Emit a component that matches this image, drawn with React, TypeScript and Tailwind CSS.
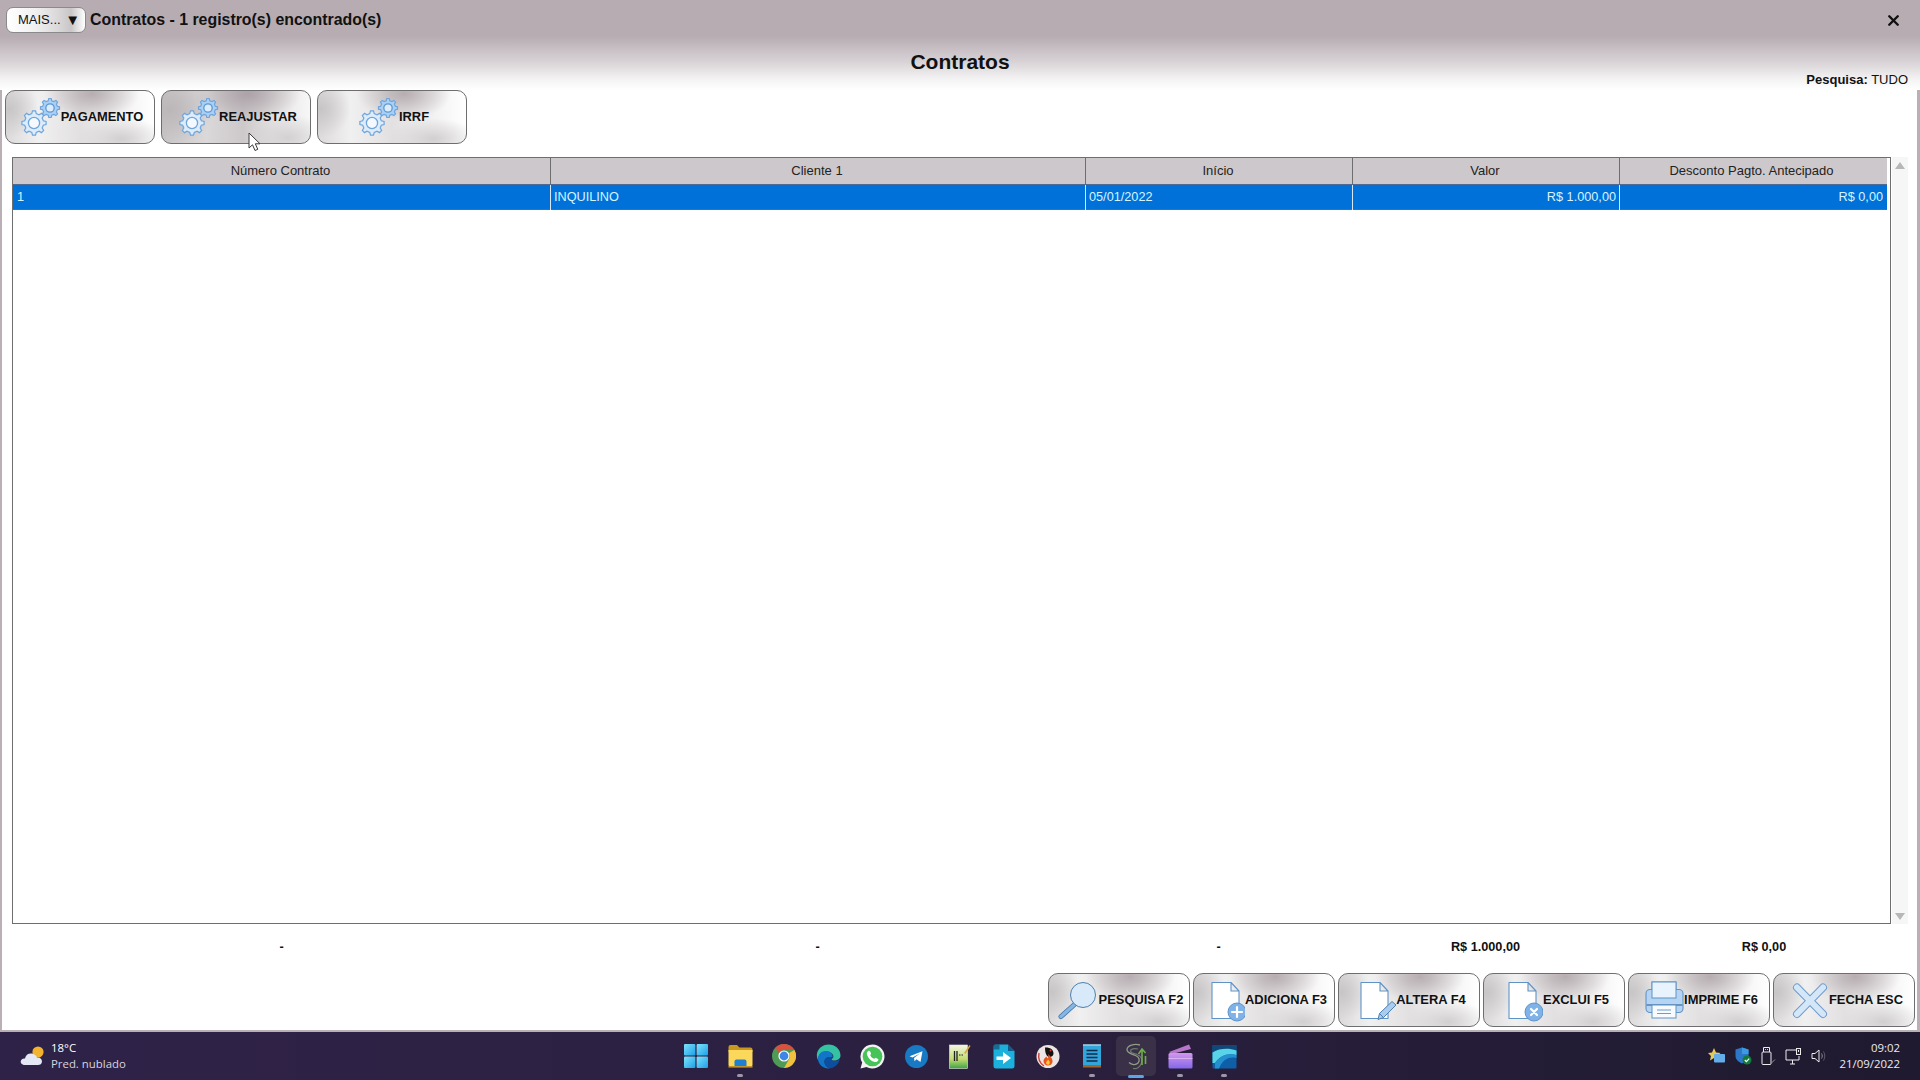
import React from "react";
import { X } from "lucide-react";

const metal =
  "bg-[radial-gradient(ellipse_32%_50%_at_58%_5%,#b6adb1_0%,rgba(182,173,177,0)_100%),radial-gradient(ellipse_30%_40%_at_78%_92%,#d2cfd0_0%,rgba(210,207,208,0)_100%),radial-gradient(ellipse_20%_55%_at_2%_35%,#c8c5c6_0%,rgba(200,197,198,0)_100%),linear-gradient(90deg,#dcdadb_0%,#f1f0f0_22%,#e2e0e1_50%,#efeeee_72%,#ffffff_100%)]";
const metalHover =
  "bg-[radial-gradient(ellipse_36%_55%_at_58%_5%,#aca2a7_0%,rgba(172,162,167,0)_100%),radial-gradient(ellipse_30%_45%_at_85%_90%,#d4d1d2_0%,rgba(212,209,210,0)_100%),radial-gradient(ellipse_30%_70%_at_5%_35%,#bbb6b8_0%,rgba(187,182,184,0)_100%),linear-gradient(90deg,#cac7c8_0%,#dbd8d9_30%,#cdc9cb_55%,#e5e3e4_75%,#f7f7f7_100%)]";

function gearPath(cx: number, cy: number, ro: number, ri: number, teeth: number) {
  const pts: string[] = [];
  const step = (Math.PI * 2) / teeth;
  for (let i = 0; i < teeth; i++) {
    const a = i * step - Math.PI / 2;
    const w = step * 0.2;
    const list: [number, number][] = [
      [ri, a - w * 1.5],
      [ro, a - w * 0.8],
      [ro, a + w * 0.8],
      [ri, a + w * 1.5],
    ];
    for (const [r, t] of list) pts.push(`${(cx + r * Math.cos(t)).toFixed(2)} ${(cy + r * Math.sin(t)).toFixed(2)}`);
  }
  return "M" + pts.join("L") + "Z";
}

function Gears() {
  return (
    <svg width="44" height="54" viewBox="0 0 44 54" className="shrink-0">
      <path d={gearPath(17, 33, 12.2, 9.6, 8)} fill="#dcecfb" stroke="#6fa5dc" strokeWidth="1.2" />
      <circle cx="17" cy="33" r="5.6" fill="#f3f9ff" stroke="#6fa5dc" strokeWidth="1.3" />
      <path d={gearPath(33, 18, 9.6, 7.5, 8)} fill="#a9d0f5" stroke="#6fa5dc" strokeWidth="1.2" />
      <circle cx="33" cy="18" r="4.2" fill="#dcecfb" stroke="#5f97d2" strokeWidth="1.3" />
    </svg>
  );
}

function IconSearch() {
  return (
    <svg width="44" height="54" viewBox="0 0 44 54" className="shrink-0">
      <line x1="20" y1="31" x2="6" y2="43.5" stroke="#3f74a8" strokeWidth="5" strokeLinecap="round" />
      <line x1="20" y1="31" x2="6" y2="43.5" stroke="#86b6e4" strokeWidth="3.4" strokeLinecap="round" />
      <circle cx="28" cy="22" r="12.5" fill="#d8e9f9" stroke="#4f7fae" strokeWidth="1" />
    </svg>
  );
}

function Doc({ x }: { x: number }) {
  const r = x + 27;
  return (
    <path
      d={`M${x} 9.5H${r - 8}L${r} 18V45.5H${x}Z M${r - 8} 9.5V18H${r}`}
      fill="#ffffff"
      stroke="#5f93c6"
      strokeWidth="1.1"
      strokeLinejoin="round"
    />
  );
}

function IconAdd() {
  return (
    <svg width="44" height="54" viewBox="0 0 44 54" className="shrink-0">
      <Doc x={11} />
      <circle cx="36" cy="39" r="9" fill="#7fb2e8" stroke="#5f93c6" strokeWidth="1" />
      <path d="M36 34V44M31 39H41" stroke="#fff" strokeWidth="2.2" strokeLinecap="round" />
    </svg>
  );
}

function IconEdit() {
  return (
    <svg width="44" height="54" viewBox="0 0 44 54" className="shrink-0">
      <Doc x={9} />
      <path d="M26 46.5L27.5 40.5L40 28.5L44 32L31.5 44.5Z" fill="#a9cdf0" stroke="#4f7fae" strokeWidth="1" strokeLinejoin="round" />
      <path d="M27.5 40.5L31.5 44.5" stroke="#4f7fae" strokeWidth="1" />
    </svg>
  );
}

function IconDelete() {
  return (
    <svg width="44" height="54" viewBox="0 0 44 54" className="shrink-0">
      <Doc x={10} />
      <circle cx="35" cy="39" r="9" fill="#7fb2e8" stroke="#5f93c6" strokeWidth="1" />
      <path d="M32 36L38 42M38 36L32 42" stroke="#fff" strokeWidth="2.2" strokeLinecap="round" />
    </svg>
  );
}

function IconPrint() {
  return (
    <svg width="44" height="54" viewBox="0 0 44 54" className="shrink-0">
      <rect x="12" y="9" width="24" height="16" fill="#e9f3fd" stroke="#5f93c6" strokeWidth="1" />
      <rect x="6" y="16.5" width="37" height="23" rx="4" fill="#b5d4f3" stroke="#5f93c6" strokeWidth="1.1" />
      <rect x="12" y="9" width="24" height="16" fill="#e9f3fd" stroke="#5f93c6" strokeWidth="1" />
      <line x1="6.5" y1="32" x2="42.5" y2="32" stroke="#4f7fae" strokeWidth="1.6" />
      <rect x="12" y="32" width="24" height="13" fill="#f7fbff" stroke="#5f93c6" strokeWidth="1" />
      <path d="M17 37H31M17 40.5H31" stroke="#6f9ccb" strokeWidth="1" />
    </svg>
  );
}

function IconClose() {
  return (
    <svg width="44" height="54" viewBox="0 0 44 54" className="shrink-0">
      <path d="M12 14.500L38 41M38 14.500L12 41" stroke="#6f9ccb" strokeWidth="8" strokeLinecap="round" />
      <path d="M12 14.500L38 41M38 14.500L12 41" stroke="#d3e7f9" strokeWidth="6" strokeLinecap="round" />
    </svg>
  );
}

function Btn({ icon, label, wide, hover, children }: { icon: React.ReactNode; label: string; wide?: boolean; hover?: boolean; children?: React.ReactNode }) {
  return (
    <div
      className={`relative flex h-[54px] items-center justify-center rounded-[10px] border border-[#6e6e6e] ${wide ? "w-[150px]" : "w-[142px]"} ${hover ? metalHover : metal}`}
    >
      {icon}
      <span className="whitespace-nowrap text-[12.9px] font-bold text-[#111]">{label}</span>
      {children}
    </div>
  );
}

const colClass = "grid w-[1874px] grid-cols-[538px_535px_267px_267px_267px]";

function Weather() {
  return (
    <svg width="26" height="22" viewBox="0 0 26 22">
      <circle cx="19" cy="7" r="5.600" fill="#f2b32f" />
      <path d="M6 20C2.5 20 1 17.500 2 15.500C3 13.500 5 13.500 6 13.500C6.500 10 9.500 8 13 8.500C16 9 17.500 11 18 12.500C21 12 23 14 23 16.500C23 19 21 20 19 20Z" fill="#e3e8f4" />
    </svg>
  );
}

function Indicator({ wide }: { wide?: boolean }) {
  return wide ? (
    <span className="absolute bottom-[2px] left-1/2 h-[3px] w-[16px] -translate-x-1/2 rounded-full bg-[#5aa7e4]" />
  ) : (
    <span className="absolute bottom-[3px] left-1/2 h-[3px] w-[6px] -translate-x-1/2 rounded-full bg-[#9b98a8]" />
  );
}

function Slot({ children, dot, active }: { children: React.ReactNode; dot?: boolean; active?: boolean }) {
  return (
    <div className="relative flex h-[48px] w-[44px] items-center justify-center">
      {active && <span className="absolute left-[2px] top-[4px] h-[40px] w-[40px] rounded-[5px] bg-[#3a3048]" />}
      <span className="relative flex">{children}</span>
      {dot && <Indicator />}
      {active && <Indicator wide />}
    </div>
  );
}

const WinLogo = () => (
  <svg width="24" height="24" viewBox="0 0 24 24">
    <defs>
      <linearGradient id="wl" x1="0" y1="0" x2="1" y2="1">
        <stop offset="0" stopColor="#7fe3fb" />
        <stop offset="1" stopColor="#1c9fe8" />
      </linearGradient>
    </defs>
    <rect x="0" y="0" width="11.4" height="11.4" rx="1" fill="url(#wl)" />
    <rect x="12.6" y="0" width="11.4" height="11.4" rx="1" fill="url(#wl)" />
    <rect x="0" y="12.6" width="11.4" height="11.4" rx="1" fill="url(#wl)" />
    <rect x="12.6" y="12.6" width="11.4" height="11.4" rx="1" fill="url(#wl)" />
  </svg>
);
const Folder = () => (
  <svg width="25" height="24" viewBox="0 0 25 24">
    <path d="M0.5 3A2 2 0 0 1 2.500 1H9L11.500 3.500H22.500A2 2 0 0 1 24.500 5.500V8H0.500Z" fill="#c9981f" />
    <path d="M0.500 6H24.500V21A2 2 0 0 1 22.500 23H2.500A2 2 0 0 1 0.500 21Z" fill="#fbd75b" />
    <path d="M6.500 23V17.500A2 2 0 0 1 8.500 15.500H16.500A2 2 0 0 1 18.500 17.500V23Z" fill="#1f7fd0" />
    <rect x="0.500" y="22" width="24" height="1.600" fill="#c5912a" />
  </svg>
);
const Chrome = () => (
  <svg width="24" height="24" viewBox="0 0 24 24">
    <circle cx="12" cy="12" r="12" fill="#4f9a55" />
    <path d="M12 0A12 12 0 0 1 22.4 6H12A6 6 0 0 0 6.800 9L3.500 3.500A12 12 0 0 1 12 0Z" fill="#d9503f" />
    <path d="M22.400 6A12 12 0 0 1 12 24L17.200 15A6 6 0 0 0 17.200 9L22.400 6Z" fill="#f2c23c" />
    <circle cx="12" cy="12" r="5.600" fill="#fff" />
    <circle cx="12" cy="12" r="4.400" fill="#3f85e6" />
  </svg>
);
const Edge = () => (
  <svg width="25" height="25" viewBox="0 0 25 25">
    <path d="M12.500 0.500C19 0.500 24.500 5 24.500 11.500C24.500 15 21.500 16.500 18.500 16.500C16 16.500 14.500 16 14 15C17 15 18 13 17 11C15.500 8 11 6.500 7.500 8C3.500 9.800 2 13 2 16C0.800 13.500 0.500 11 1.200 8.500C2.800 3.500 7.500 0.500 12.500 0.500Z" fill="#35c1a3" />
    <path d="M2 16C1.500 11 5 7 10 7C15 7 17.500 11 16.500 13.500C13 12 9 13.500 8.500 17C8.200 20 10.500 23.500 14 24.300C8.500 25.500 3 21.500 2 16Z" fill="#1176c8" />
    <path d="M14 24.300C10.500 23.500 8.200 20 8.500 17C9 13.500 13 12 16.500 13.500C14.500 16.500 17.500 17.500 20 17C22 16.500 23.500 16 24 15C22.500 20.500 18.500 23.800 14 24.300Z" fill="#0c4fa0" />
  </svg>
);
const WhatsApp = () => (
  <svg width="25" height="25" viewBox="0 0 25 25">
    <path d="M12.500 0.500A12 12 0 1 1 6.500 22.900L0.500 24.500L2.200 18.600A12 12 0 0 1 12.500 0.500Z" fill="#f3f3f3" />
    <circle cx="12.500" cy="12.500" r="9.800" fill="#46c458" />
    <path d="M8.600 6.800C9.200 6.500 9.700 6.600 10 7.200L11 9.300C11.200 9.800 11 10.200 10.500 10.700C10.200 11 10.200 11.300 10.500 11.800C11.300 13.100 12.200 14 13.500 14.600C14 14.800 14.300 14.800 14.600 14.400C15.100 13.800 15.500 13.600 16 13.900L18 14.900C18.500 15.200 18.600 15.600 18.300 16.300C17.700 17.700 16 18.300 14.600 18C10.800 17 7.900 14 7 10.500C6.600 8.900 7.200 7.500 8.600 6.800Z" fill="#fff" />
  </svg>
);
const Telegram = () => (
  <svg width="23" height="23" viewBox="0 0 23 23">
    <circle cx="11.500" cy="11.500" r="11.500" fill="#1879c4" />
    <path d="M4.500 11.300L17.500 6.200L15.500 17L11.500 14.300L9.500 16.300L9 13L14.800 8.500L7.500 12.500Z" fill="#fff" />
  </svg>
);
const Sheet = () => (
  <svg width="22" height="25" viewBox="0 0 22 25">
    <defs>
      <linearGradient id="sh" x1="0" y1="0" x2="0" y2="1">
        <stop offset="0" stopColor="#f5f6e2" />
        <stop offset="0.6" stopColor="#c2dc72" />
        <stop offset="1" stopColor="#3ea344" />
      </linearGradient>
    </defs>
    <rect x="0.500" y="1" width="18" height="23.500" fill="url(#sh)" stroke="#e8e8e8" strokeWidth="0.600" />
    <path d="M5.500 7V17M8 7V17" stroke="#222" strokeWidth="1.300" />
    <path d="M10 11H11.500M12.500 11H14" stroke="#222" strokeWidth="1" />
    <path d="M15 9L20.500 1L21.500 2L16.500 10Z" fill="#d8a83c" />
  </svg>
);
const Forward = () => (
  <svg width="22" height="25" viewBox="0 0 22 25">
    <path d="M0.500 2.500A2 2 0 0 1 2.500 0.500H15L21.500 7V22A2.500 2.500 0 0 1 19 24.500H3A2.500 2.500 0 0 1 0.500 22Z" fill="#1cb0dc" />
    <path d="M15 0.500L21.500 7H15Z" fill="#0d5f8a" />
    <path d="M3.500 12.500H10V8L18 14L10 20V16H3.500Z" fill="#fff" />
    <rect x="0.500" y="0.500" width="6" height="5" fill="#10425f" opacity="0.6" />
  </svg>
);
const Flame = () => (
  <svg width="24" height="25" viewBox="0 0 24 25">
    <circle cx="12" cy="12.500" r="11.500" fill="#ece4e2" />
    <path d="M9 3.500C13 3 17.500 5 17.500 9.500C17.500 12 15 13 13.500 13C11.500 13 9 11 9 3.500Z" fill="#111" />
    <circle cx="14.500" cy="6.500" r="1" fill="#e33" />
    <path d="M12 10C15 13 17 15 16.500 18C16 20.500 14 21.500 12 21.500C9.500 21.500 7.500 19.500 7.500 17C7.500 14.500 9.500 13.500 10.500 12.500C11 14 11.500 14.500 12 14C12.500 13 12.500 11.500 12 10Z" fill="#e8541f" />
    <path d="M12 15.500C13.500 17 14 18 13.800 19C13.500 20.300 12.800 20.800 12 20.800C11 20.800 10 20 10 18.800C10 17.500 11.500 16.800 12 15.500Z" fill="#f9c53a" />
    <path d="M3 9C2 14 3.500 19 8 22" stroke="#c7423a" strokeWidth="1.400" fill="none" />
  </svg>
);
const Notes = () => (
  <svg width="18" height="26" viewBox="0 0 18 26">
    <rect x="0" y="1.500" width="18" height="21" fill="#32a5db" />
    <rect x="0" y="22" width="18" height="2.500" fill="#a2642c" />
    <path d="M1 1V3M3 1V3M5 1V3M7 1V3M9 1V3M11 1V3M13 1V3M15 1V3M17 1V3" stroke="#dfe9ef" strokeWidth="1" />
    <path d="M3.500 7.500H14.500M3.500 11H14.500M3.500 14.500H14.500M3.500 18H14.500" stroke="#0e2b4a" strokeWidth="1.500" />
  </svg>
);
const SApp = () => (
  <svg width="22" height="27" viewBox="0 0 22 27" fill="none">
    <path d="M15 2C9 0.500 2.500 2.500 2 6.500C1.500 10 7 11 10.500 12.500C14 14 15.500 17 13 20C11 22.300 6.500 22 4 19.500" stroke="#8f9c88" strokeWidth="1.300" />
    <path d="M13 6C9 5 5.500 6 5.500 8C5.500 10 9 10.500 12 11.500C16.500 13 18.500 17.500 15.500 22C14 24.500 11 26 8 25.500" stroke="#6e7a6c" strokeWidth="1.200" />
    <path d="M13.500 11L17 6L20.500 10M17 6.500V22M20.500 13V21" stroke="#6fae49" strokeWidth="1.600" />
  </svg>
);
const Clapper = () => (
  <svg width="25" height="25" viewBox="0 0 25 25">
    <defs>
      <linearGradient id="cl" x1="0" y1="0" x2="0" y2="1">
        <stop offset="0" stopColor="#d397ee" />
        <stop offset="1" stopColor="#8467e8" />
      </linearGradient>
    </defs>
    <path d="M1 8L21 0.500L23 5L4 10Z" fill="#b777c9" />
    <rect x="0.500" y="9" width="24" height="15.500" rx="1.500" fill="url(#cl)" />
    <path d="M0.500 14.500H24.500" stroke="#e3c7f5" strokeWidth="1" opacity="0.700" />
  </svg>
);
const BlueApp = () => (
  <svg width="25" height="25" viewBox="0 0 25 25">
    <rect x="0.500" y="1" width="24" height="23.500" rx="1" fill="#0f5fa8" />
    <path d="M0.500 1H24.500V7C15 5 7 8 0.500 14Z" fill="#10487a" />
    <path d="M0.500 8.500C8 4 17 4 24.500 6.500V11C16 8.500 8 11.500 3 19H0.500Z" fill="#58d4e8" />
    <path d="M3 19C8 11.500 16 8.500 24.500 11V14C17 12.500 11 15 7 24.500H3Z" fill="#2490d0" />
  </svg>
);

const TrayStar = () => (
  <svg width="18" height="16" viewBox="0 0 18 16">
    <path d="M6 0L8 4.500L12.500 5L9 8L10 12.500L6 10L2 12.500L3 8L0 5L4 4.500Z" fill="#e9c85a" />
    <rect x="6" y="6" width="11" height="8.500" rx="1" fill="#63aee8" />
  </svg>
);
const TrayShield = () => (
  <svg width="17" height="18" viewBox="0 0 17 18">
    <path d="M7 0.500L13.500 2.500V9C13.500 12 11 15 7 16.500C3 15 0.500 12 0.500 9V2.500Z" fill="#2c77c7" />
    <path d="M7 0.500L13.500 2.500V7H7Z" fill="#3c9be0" />
    <circle cx="12" cy="13" r="4.500" fill="#127a3a" />
    <path d="M9.800 13L11.400 14.600L14.200 11.600" stroke="#fff" strokeWidth="1.200" fill="none" />
  </svg>
);
const TrayUsb = () => (
  <svg width="15" height="18" viewBox="0 0 15 18" fill="none" stroke="#ececec" strokeWidth="1">
    <rect x="1" y="5" width="9" height="12.500" rx="1" />
    <path d="M2.500 5V0.500H8.500V5" />
    <path d="M4 2.500H4.800M6.200 2.500H7" />
    <path d="M9.500 17L14 12.500" stroke="#8f8f8f" />
  </svg>
);
const TrayNet = () => (
  <svg width="17" height="17" viewBox="0 0 17 17" fill="none" stroke="#ececec" strokeWidth="1">
    <path d="M11 2H1V12H14V8" />
    <path d="M5 16H10M7.500 12V16" />
    <rect x="11.500" y="0.500" width="4" height="6" fill="#2a2140" />
    <path d="M13.500 2V4" />
  </svg>
);
const TraySound = () => (
  <svg width="17" height="16" viewBox="0 0 17 16" fill="none" stroke="#ececec" strokeWidth="1">
    <path d="M1 5.500H4L8 2V14L4 10.500H1Z" />
    <path d="M10.500 5.500C11.500 7 11.500 9 10.500 10.500" stroke="#8e8c98" />
    <path d="M12.500 3.500C14.200 6 14.200 10 12.500 12.500" stroke="#5e5c68" />
  </svg>
);

export default function App() {
  return (
    <div className="flex h-[1080px] w-[1920px] flex-col overflow-hidden bg-white [font-family:'Liberation_Sans',Arial,sans-serif] text-[#111]">
      <div className="flex h-[1032px] flex-col border-x-2 border-b-2 border-r-[3px] border-[#b9b0b5] bg-white">
        <div className="-mx-[2px] -mr-[3px] flex h-[90px] flex-col bg-[linear-gradient(180deg,#b6acb1_0,#b6acb1_36px,#d8d3d6_62px,#f5f4f5_80px,#ffffff_90px)]">
          <div className="flex h-[39px] items-center pl-[6px] pr-[18px]">
            <div className="flex h-[26px] w-[80px] items-center justify-between rounded-[7px] border border-[#8a8a8a] bg-[linear-gradient(90deg,#ffffff_0%,#f2f1f1_35%,#d6d3d4_70%,#c9c6c7_82%,#ffffff_100%)] pl-[11px] pr-[5px]">
              <span className="text-[13px] text-[#111]">MAIS...</span>
              <span className="text-[15px] leading-none text-[#111]">▼</span>
            </div>
            <span className="ml-[4px] text-[15.9px] font-bold text-[#111]">Contratos - 1 registro(s) encontrado(s)</span>
            <X className="ml-auto mt-[2px]" size={17} strokeWidth={3.4} color="#111" />
          </div>
          <div className="relative flex h-[47px] items-start justify-center">
            <h1 className="mt-[10px] text-[21px] font-bold leading-[26px]">Contratos</h1>
            <span className="absolute right-[12px] top-[33px] text-[13px] leading-[16px]">
              <b>Pesquisa:</b> TUDO
            </span>
          </div>
        </div>

        <div className="flex gap-[6px] pl-[3px]">
          <Btn wide icon={<Gears />} label="PAGAMENTO" />
          <Btn wide hover icon={<Gears />} label="REAJUSTAR">
            <svg className="absolute left-[86px] top-[41px]" width="14" height="20" viewBox="0 0 14 20">
              <path d="M1 1V16L4.500 12.800L7 18.500L9.800 17.300L7.300 11.800H12Z" fill="#fff" stroke="#3c3c3c" strokeWidth="1" strokeLinejoin="round" />
            </svg>
          </Btn>
          <Btn wide icon={<Gears />} label="IRRF" />
        </div>

        <div className="ml-[10px] mt-[13px] flex">
          <div className="h-[767px] w-[1879px] border border-[#6e6e6e] bg-white">
            <div className={`${colClass} h-[26px] bg-[#cdc8cb] text-[13px] leading-[26px] text-[#222]`}>
              <div className="border-r border-[#6e6e6e] pr-[2px] text-center">Número Contrato</div>
              <div className="border-r border-[#6e6e6e] pr-[2px] text-center">Cliente 1</div>
              <div className="border-r border-[#6e6e6e] pr-[2px] text-center">Início</div>
              <div className="border-r border-[#6e6e6e] pr-[2px] text-center">Valor</div>
              <div className="pr-[4px] text-center">Desconto Pagto. Antecipado</div>
            </div>
            <div className={`${colClass} h-[26px] border-y border-[#4f6a94] bg-[#0071d9] text-[12.7px] leading-[25px] text-[#d5f4ff]`}>
              <div className="border-r border-[#d8e8f8] pl-[4px]">1</div>
              <div className="border-r border-[#d8e8f8] pl-[3px]">INQUILINO</div>
              <div className="border-r border-[#d8e8f8] pl-[3px]">05/01/2022</div>
              <div className="border-r border-[#d8e8f8] pr-[3px] text-right">R$ 1.000,00</div>
              <div className="pr-[4px] text-right">R$ 0,00</div>
            </div>
          </div>
          <div className="ml-[1px] flex h-[767px] w-[16px] flex-col items-center justify-between bg-[#f6f6f6] pb-[4px] pt-[5px]">
            <svg width="10" height="7" viewBox="0 0 10 7"><path d="M5 0L10 7H0Z" fill="#b9b6b8" /></svg>
            <svg width="10" height="7" viewBox="0 0 10 7"><path d="M0 0H10L5 7Z" fill="#b9b6b8" /></svg>
          </div>
        </div>

        <div className="ml-[11px] mt-[15px] grid h-[16px] grid-cols-[537px_535px_267px_267px_290px] text-center text-[12.7px] font-bold leading-[16px] text-[#111]">
          <div>-</div>
          <div>-</div>
          <div>-</div>
          <div>R$ 1.000,00</div>
          <div>R$ 0,00</div>
        </div>

        <div className="mt-[18px] flex justify-end gap-[3px] pr-[2px]">
          <Btn icon={<IconSearch />} label="PESQUISA F2" />
          <Btn icon={<IconAdd />} label="ADICIONA F3" />
          <Btn icon={<IconEdit />} label="ALTERA F4" />
          <Btn icon={<IconDelete />} label="EXCLUI F5" />
          <Btn icon={<IconPrint />} label="IMPRIME F6" />
          <Btn icon={<IconClose />} label="FECHA ESC" />
        </div>
      </div>

      <div className="grid h-[48px] grid-cols-[674px_572px_1fr] bg-[linear-gradient(90deg,#2f2248_0%,#2b2040_50%,#1f1a2f_100%)] [font-family:'Open_Sans','Noto_Sans',sans-serif]">
        <div className="flex items-center pl-[19px]">
          <Weather />
          <div className="ml-[6px] flex flex-col text-[11.4px] leading-[16px]">
            <span className="text-white">18°C</span>
            <span className="text-[#d8d4de]">Pred. nublado</span>
          </div>
        </div>
        <div className="flex">
          <Slot><WinLogo /></Slot>
          <Slot dot><Folder /></Slot>
          <Slot><Chrome /></Slot>
          <Slot><Edge /></Slot>
          <Slot><WhatsApp /></Slot>
          <Slot><Telegram /></Slot>
          <Slot><Sheet /></Slot>
          <Slot><Forward /></Slot>
          <Slot><Flame /></Slot>
          <Slot dot><Notes /></Slot>
          <Slot active><SApp /></Slot>
          <Slot dot><Clapper /></Slot>
          <Slot dot><BlueApp /></Slot>
        </div>
        <div className="flex items-center justify-end pr-[20px]">
          <div className="mr-[12px] flex items-center gap-[9px]">
            <TrayStar />
            <TrayShield />
            <TrayUsb />
            <TrayNet />
            <TraySound />
          </div>
          <div className="flex flex-col items-end text-[11.4px] leading-[16px] text-[#ececf0]">
            <span>09:02</span>
            <span>21/09/2022</span>
          </div>
        </div>
      </div>
    </div>
  );
}
